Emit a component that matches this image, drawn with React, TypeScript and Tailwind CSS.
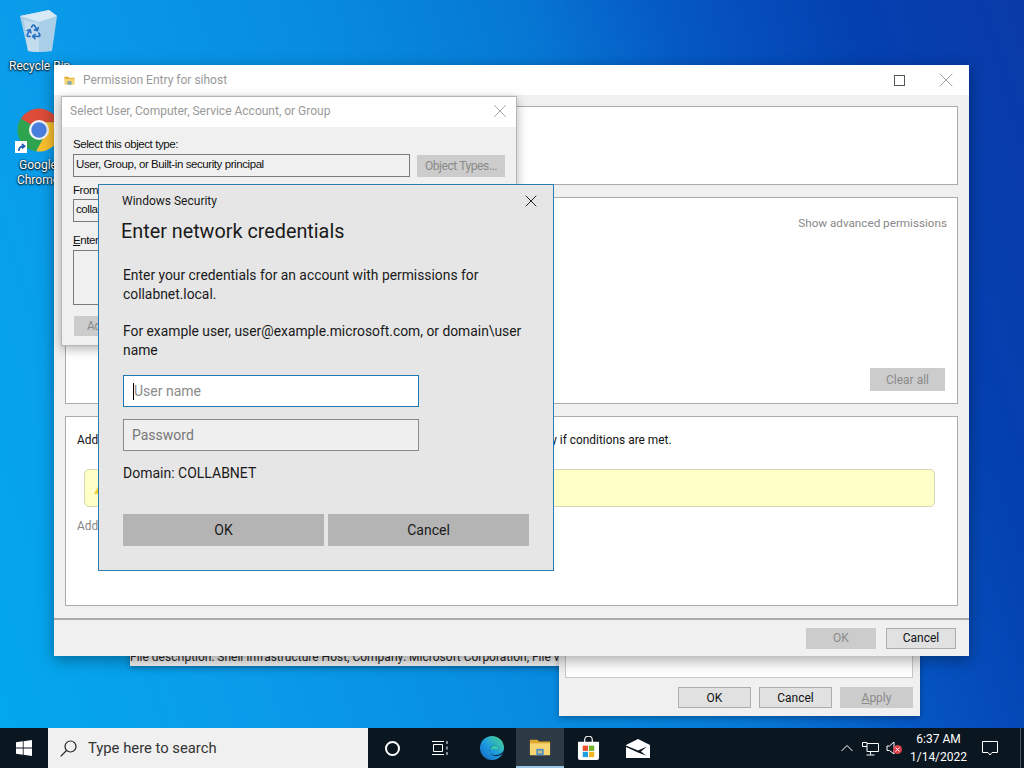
import type { ReactNode } from "react"
import { Recycle, X } from "lucide-react"

const segoe = "font-['Roboto',sans-serif]"
const shell = "font-['Liberation_Sans',sans-serif]"

function WinButton({ label, disabled, className }: { label: ReactNode; disabled?: boolean; className: string }) {
  return (
    <div
      className={`flex items-center justify-center text-xs ${segoe} ${
        disabled ? "bg-[#cccccc] text-[#8a8a8a]" : "bg-[#e1e1e1] border border-[#adadad] text-[#111]"
      } ${className}`}
    >
      {label}
    </div>
  )
}

function FolderIcon({ className }: { className: string }) {
  return (
    <svg viewBox="0 0 24 20" className={className}>
      <path d="M1 2h8l2 2h12v4H1z" fill="#e0a92e" />
      <rect x="1" y="6" width="22" height="13" fill="#f8d573" />
      <rect x="8" y="12" width="8" height="7" fill="#4a90c8" />
      <rect x="10" y="14" width="4" height="3" fill="#d9c27a" />
    </svg>
  )
}

function ChromeIcon() {
  return (
    <svg viewBox="0 0 48 48" className="w-[46px] h-[46px]">
      <path d="M24 24 L5 12 A22.5 22.5 0 0 1 45 16 L24 16z" fill="#dd4b39" />
      <path d="M24 24 L5 12 A22.5 22.5 0 0 0 21 46.3 L31 28z" fill="#2fa44f" />
      <path d="M24 16 L45 16 A22.5 22.5 0 0 1 21 46.3 L31 28z" fill="#fbc02d" />
      <circle cx="24" cy="24" r="10.5" fill="#f4f4f4" />
      <circle cx="24" cy="24" r="8" fill="#4a7fe0" />
    </svg>
  )
}

function RecycleBinIcon() {
  return (
    <svg viewBox="0 0 40 44" className="w-[40px] h-[44px]">
      <path d="M1 7 L30 1 L38 7 L33 42 Q20 44 9 42z" fill="#a9cfe8" />
      <path d="M1 7 L30 1 L38 7 L20 13z" fill="#d6e9f5" />
      <path d="M5 11 L20 14 L20 43 Q14 43 9 42z" fill="#c2dced" />
    </svg>
  )
}

function EdgeIcon() {
  return (
    <svg viewBox="0 0 24 24" className="w-6 h-6">
      <defs>
        <linearGradient id="edgeRing" x1="0" y1="1" x2="1" y2="0">
          <stop offset="0" stopColor="#1565c0" />
          <stop offset="0.45" stopColor="#1c9ae0" />
          <stop offset="1" stopColor="#4fd98a" />
        </linearGradient>
      </defs>
      <circle cx="12" cy="12" r="12" fill="url(#edgeRing)" />
      <path d="M24 14.5 C20 20 13 20.5 10.5 16.5 C8.5 13 11 9.5 14.5 9.5 C17 9.5 18.5 11 18.5 13 L10 13 C9.5 18 14 24 24 17z" fill="#0b2a4a" />
      <path d="M10 13 C11 10.5 13 9.5 14.5 9.5 C17 9.5 18.5 11 18.5 13z" fill="#35c6b0" />
    </svg>
  )
}

function StoreIcon() {
  return (
    <svg viewBox="0 0 24 26" className="w-[23px] h-[25px]">
      <path d="M8 7 V4 a4 4 0 0 1 8 0 V7" fill="none" stroke="#e8e8e8" strokeWidth="1.4" />
      <path d="M1 6 H23 V23 a2 2 0 0 1 -2 2 H3 a2 2 0 0 1 -2 -2z" fill="#ffffff" />
      <rect x="6" y="10" width="5.5" height="5.5" fill="#e8502e" />
      <rect x="12.5" y="10" width="5.5" height="5.5" fill="#6fb52c" />
      <rect x="6" y="16.5" width="5.5" height="5.5" fill="#1f9fe0" />
      <rect x="12.5" y="16.5" width="5.5" height="5.5" fill="#f5b51c" />
    </svg>
  )
}

function MailIcon() {
  return (
    <svg viewBox="0 0 24 19" className="w-6 h-[19px]">
      <path d="M0 6 L12 0 L24 6 V19 H0z" fill="#ffffff" />
      <path d="M0 6.5 L12 11.5 L21 7.5 L15 12.5 L20 16.5 L12 13.5 L0 8z" fill="#0a1620" />
    </svg>
  )
}

function Taskbar() {
  return (
    <div className="absolute left-0 right-0 bottom-0 h-10 flex bg-[#0a1620] text-white">
      <div className="w-12 flex items-center justify-center">
        <svg viewBox="0 0 16 16" className="w-4 h-4" fill="#ffffff">
          <path d="M0 2.3 L6.8 1.3 V7.6 H0z M7.6 1.2 L16 0 V7.6 H7.6z M0 8.4 H6.8 V14.7 L0 13.7z M7.6 8.4 H16 V16 L7.6 14.8z" />
        </svg>
      </div>
      <div className={`w-[320px] bg-[#f0f0f0] flex items-center pl-[12px] gap-[11px] text-[#333] text-[14.8px] ${segoe}`}>
        <svg viewBox="0 0 17 17" className="w-[17px] h-[17px]" fill="none" stroke="#222" strokeWidth="1.2">
          <circle cx="10.5" cy="6.5" r="5.5" />
          <path d="M6.5 10.5 L0.7 16.3" />
        </svg>
        <span>Type here to search</span>
      </div>
      <div className="w-12 flex items-center justify-center">
        <div className="w-[15px] h-[15px] rounded-full border-2 border-white" />
      </div>
      <div className="w-[52px] flex items-center justify-center pr-1">
        <svg viewBox="0 0 16 16" className="w-4 h-4" fill="none" stroke="#ffffff" strokeWidth="1">
          <path d="M0 1.5 H12 M0 14.5 H12 M1.5 4.5 H10.5 V11.5 H1.5z M15 1 V4 M15 6.5 V9.5 M15 12 V15" />
        </svg>
      </div>
      <div className="w-12 flex items-center justify-center">
        <EdgeIcon />
      </div>
      <div className="w-12 flex items-center justify-center bg-[#2c3a45] border-b-2 border-[#9cc8e8]">
        <FolderIcon className="w-[22px] h-5" />
      </div>
      <div className="w-12 flex items-center justify-center">
        <StoreIcon />
      </div>
      <div className="w-[52px] flex items-center justify-center">
        <MailIcon />
      </div>

      <div className={`ml-auto flex items-center text-xs ${segoe}`}>
        <div className="w-[22px] flex justify-center">
          <svg viewBox="0 0 12 8" className="w-3 h-2" fill="none" stroke="#ffffff" strokeWidth="1">
            <path d="M0.5 7 L6 1.5 L11.5 7" />
          </svg>
        </div>
        <div className="w-6 flex justify-center">
          <svg viewBox="0 0 17 15" className="w-[17px] h-[15px]" fill="none" stroke="#ffffff" strokeWidth="1">
            <path d="M0.5 1.5 H5 V5.5 H0.5z M5 2.5 H16.5 V10.5 H5 V5.5 M8.5 10.5 V13.5 M4.5 14 H12.5" />
          </svg>
        </div>
        <div className="w-6 flex justify-center relative">
          <svg viewBox="0 0 17 15" className="w-[17px] h-[15px]" fill="none" stroke="#ffffff" strokeWidth="1">
            <path d="M1 5 H3.5 L8 1 V13 L3.5 9.5 H1z" />
          </svg>
          <span className="absolute left-[11px] top-[4px] w-[9px] h-[9px] rounded-full bg-[#d9434e] flex items-center justify-center">
            <X className="w-[7px] h-[7px] text-white" strokeWidth={3} />
          </span>
        </div>
        <div className="w-[65px] flex flex-col items-center leading-[18px]">
          <span>6:37 AM</span>
          <span>1/14/2022</span>
        </div>
        <div className="w-[37px] flex justify-center">
          <svg viewBox="0 0 16 16" className="w-4 h-4" fill="none" stroke="#ffffff" strokeWidth="1">
            <path d="M0.5 1.5 H15.5 V12.5 H10 L8 15 L6 12.5 H0.5z" />
          </svg>
        </div>
        <div className="w-4 flex justify-end h-full">
          <div className="w-px mr-[3px] bg-[#4a5560]" />
        </div>
      </div>
    </div>
  )
}

function PermissionWindow() {
  return (
    <div className={`absolute left-[54px] top-[65px] w-[915px] h-[591px] bg-[#f0f0f0] flex flex-col shadow-[0_4px_14px_rgba(0,0,0,0.35)] ${segoe}`}>
      <div className="h-[30px] bg-white flex items-center text-xs text-[#999]">
        <FolderIcon className="w-[11px] h-[15px] ml-[10px] mr-[8px]" />
        <span>Permission Entry for sihost</span>
        <div className="ml-auto w-[11px] h-[11px] border border-[#555]" />
        <X className="ml-[29px] mr-[11px] w-6 h-6 text-[#777]" strokeWidth={0.7} />
      </div>
      <div className="flex-1 px-[11px] pt-[11px] flex flex-col gap-3">
        <div className="h-[79px] bg-white border border-[#ababab]" />
        <div className="h-[207px] bg-white border border-[#ababab] flex flex-col items-end pr-[10px] pt-[17px]">
          <span className="text-[11.7px] leading-4 text-[#888]">Show advanced permissions</span>
          <WinButton label="Clear all" disabled className="w-[75px] h-[23px] mt-[137px] mr-[2px]" />
        </div>
        <div className="h-[190px] bg-white border border-[#ababab] pl-[11px] pt-[15px] text-[11.9px] leading-4 text-[#111]">
          <p>Add a condition to limit access. The principal will be granted the specified permissions only if conditions are met.</p>
          <div className="h-[38px] ml-[7px] mr-[22px] mt-[21px] bg-[#ffffc8] border border-[#d6d6b4] rounded-[5px] flex items-center pl-[9px]">
            <svg viewBox="0 0 12 11" className="w-3 h-[11px]">
              <path d="M6 0 L12 11 H0z" fill="#f2cf3a" />
            </svg>
          </div>
          <p className="mt-[11px] text-[#888]">Add a condition</p>
        </div>
      </div>
      <div className="h-[38px] border-t-2 border-[#ababab] flex items-center justify-end gap-[10px] pr-[13px]">
        <WinButton label="OK" disabled className="w-[70px] h-[21px]" />
        <WinButton label="Cancel" className="w-[70px] h-[21px]" />
      </div>
    </div>
  )
}

function SelectDialog() {
  const field = "h-[23px] border border-[#7a7a7a] bg-[#f0f0f0] flex items-center pl-[2px] pb-[2px] text-[#111]"
  return (
    <div className={`absolute left-[61px] top-[96px] w-[456px] h-[250px] bg-[#f0f0f0] border border-[#b5b5b5] shadow-[0_3px_10px_rgba(0,0,0,0.3)] ${shell}`}>
      <div className={`h-[30px] bg-white flex items-center justify-between pl-[8px] pr-[5px] pb-[2px] text-xs text-[#999] ${segoe}`}>
        <span>Select User, Computer, Service Account, or Group</span>
        <X className="w-[22px] h-[22px] text-[#888]" strokeWidth={0.8} />
      </div>
      <div className="px-[11px] pt-[11px] text-[11.5px] tracking-[-0.42px] text-[#111] flex flex-col">
        <span className="leading-[13px]">Select this object type:</span>
        <div className="flex gap-[7px] mt-[3px] items-center">
          <div className={`${field} w-[337px]`}>User, Group, or Built-in security principal</div>
          <WinButton label="Object Types..." disabled className="w-[88px] h-[22px]" />
        </div>
        <span className="leading-[13px] mt-[7px]">From</span>
        <div className={`${field} w-[337px] mt-[2px]`}>collabnet.local</div>
        <span className="leading-[13px] mt-[12px]"><u>E</u>nter</span>
        <div className="w-[337px] h-[55px] mt-[3px] border border-[#7a7a7a] bg-[#f0f0f0]" />
        <WinButton label="Advanced..." disabled className="w-[84px] h-[20px] mt-[11px] ml-[1px]" />
      </div>
    </div>
  )
}

function SecurityDialog() {
  return (
    <div className={`absolute left-[98px] top-[184px] w-[456px] h-[387px] bg-[#e6e6e6] border border-[#2b7cb3] pl-[24px] text-[#1a1a1a] flex flex-col ${segoe}`}>
      <div className="flex items-center justify-between h-[30px] pt-[2px] pr-[12px] -ml-px text-xs">
        <span>Windows Security</span>
        <X className="w-5 h-5 text-[#111]" strokeWidth={1.1} />
      </div>
      <h1 className="text-[19.8px] leading-[28px] mt-[3px] -ml-[2px] font-normal">Enter network credentials</h1>
      <p className="text-[13.85px] leading-[18.5px] mt-[20px]">
        Enter your credentials for an account with permissions for
        <br />
        collabnet.local.
      </p>
      <p className="text-[13.85px] leading-[18.5px] mt-[19px]">
        For example user, user@example.microsoft.com, or domain\user
        <br />
        name
      </p>
      <div className="w-[296px] h-[32px] mt-[16px] bg-white border border-[#1f78b4] flex items-center pl-[9px] text-sm text-[#8a8a8a]">
        <span className="w-px h-[17px] bg-black" />
        <span>User name</span>
      </div>
      <div className="w-[296px] h-[32px] mt-[12px] bg-[#efefef] border border-[#8a8a8a] flex items-center pl-[8px] text-sm text-[#777]">
        Password
      </div>
      <p className="text-sm leading-[18px] mt-[13px]">Domain: COLLABNET</p>
      <div className="flex gap-1 mt-[32px] text-sm">
        <div className="w-[201px] h-[32px] bg-[#b4b4b4] flex items-center justify-center">OK</div>
        <div className="w-[201px] h-[32px] bg-[#b4b4b4] flex items-center justify-center">Cancel</div>
      </div>
    </div>
  )
}

export default function App() {
  const label = `absolute text-xs text-white leading-[15px] text-center [text-shadow:0_1px_2px_#000,0_0_2px_#000] ${segoe}`
  return (
    <div className="relative w-[1024px] h-[768px] overflow-hidden bg-[linear-gradient(72deg,#02a8ee_0%,#0a9cea_20%,#078ce0_43%,#0678d4_60%,#0558c4_72%,#0440b0_86%,#0a3aa8_100%)]">
      <div className="absolute left-[19px] top-[9px]">
        <RecycleBinIcon />
        <Recycle className="absolute left-[6px] top-[14px] w-[17px] h-[17px] text-[#2a72c4]" strokeWidth={2.5} />
      </div>
      <span className={`${label} left-[9px] top-[59px]`}>Recycle Bin</span>
      <div className="absolute left-[16px] top-[107px]">
        <ChromeIcon />
      </div>
      <div className="absolute left-[15px] top-[141px] w-3 h-3 bg-white flex items-center justify-center">
        <svg viewBox="0 0 10 10" className="w-[9px] h-[9px]" fill="none" stroke="#1a5fb4" strokeWidth="1.8">
          <path d="M2 9 C2 5 4 3.5 8 3.5 M5.5 1 L8.5 3.5 L5.5 6" />
        </svg>
      </div>
      <span className={`${label} left-[10px] w-[56px] top-[158px]`}>
        Google
        <br />
        Chrome
      </span>

      <div className={`absolute left-[130px] top-[640px] w-[440px] h-[26px] bg-[#f0f0f0] pt-[9px] text-xs text-[#222] whitespace-nowrap overflow-hidden shadow-[0_2px_6px_rgba(0,0,0,0.3)] ${segoe}`}>
        File description: Shell Infrastructure Host, Company: Microsoft Corporation, File version: 10.0
      </div>
      <div className="absolute left-[559px] top-[640px] w-[361px] h-[76px] bg-[#f0f0f0] px-[6px] flex flex-col shadow-[0_2px_6px_rgba(0,0,0,0.3)]">
        <div className="h-[38px] mr-[1px] bg-white border border-[#c8c8c8]" />
        <div className="flex justify-end gap-2 mt-[9px] mr-px">
          <WinButton label="OK" className="w-[73px] h-[21px]" />
          <WinButton label="Cancel" className="w-[73px] h-[21px]" />
          <WinButton label={<><u>A</u>pply</>} disabled className="w-[73px] h-[21px]" />
        </div>
      </div>

      <PermissionWindow />
      <SelectDialog />
      <SecurityDialog />
      <Taskbar />
    </div>
  )
}
